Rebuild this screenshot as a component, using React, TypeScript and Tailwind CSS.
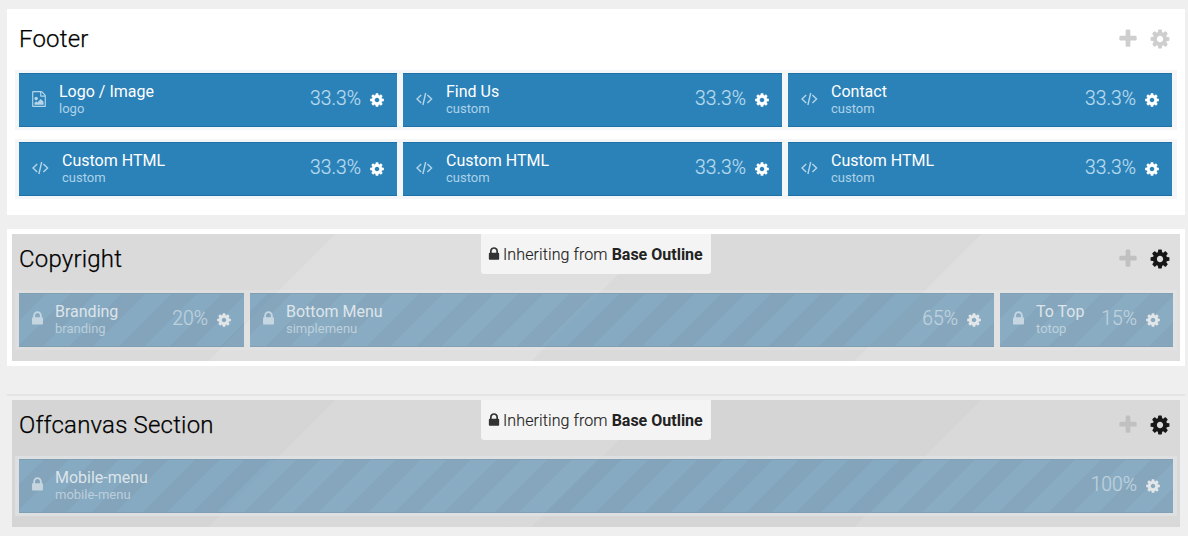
import React from "react";

const COG =
  "M1152 896q0-106-75-181t-181-75-181 75-75 181 75 181 181 75 181-75 75-181zm512-109v222q0 12-8 23t-20 13l-185 28q-19 54-39 91 35 50 107 138 10 12 10 25t-9 23q-27 37-99 108t-94 71q-12 0-26-9l-138-108q-44 23-91 38-16 136-29 186-7 28-36 28h-222q-14 0-24.5-8.5t-11.5-21.5l-28-184q-49-16-90-37l-141 107q-10 9-25 9-14 0-25-11-126-114-165-168-7-10-7-23 0-12 8-23 15-21 51-66.5t54-70.5q-27-50-41-99l-183-27q-13-2-21-12.5t-8-23.5v-222q0-12 8-23t19-13l186-28q14-46 39-92-40-57-107-138-10-12-10-24 0-10 9-23 26-36 98.5-107.5t94.5-71.5q13 0 26 10l138 107q44-23 91-38 16-136 29-186 7-28 36-28h222q14 0 24.5 8.5t11.5 21.5l28 184q49 16 90 37l142-107q9-9 24-9 13 0 25 10 129 119 165 170 7 8 7 22 0 12-8 23-15 21-51 66.5t-54 70.5q26 50 41 98l183 28q13 2 21 12.5t8 23.5z";
const PLUS =
  "M1600 736v192q0 40-28 68t-68 28h-416v416q0 40-28 68t-68 28h-192q-40 0-68-28t-28-68v-416h-416q-40 0-68-28t-28-68v-192q0-40 28-68t68-28h416v-416q0-40 28-68t68-28h192q40 0 68 28t28 68v416h416q40 0 68 28t28 68z";
const LOCK =
  "M640 768h512v-192q0-106-75-181t-181-75-181 75-75 181v192zm832 96v576q0 40-28 68t-68 28h-960q-40 0-68-28t-28-68v-576q0-40 28-68t68-28h32v-192q0-184 132-316t316-132 316 132 132 316v192h32q40 0 68 28t28 68z";
const IMAGE =
  "M1596 380q28 28 48 76t20 88v1152q0 40-28 68t-68 28h-1344q-40 0-68-28t-28-68v-1600q0-40 28-68t68-28h896q40 0 88 20t76 48zm-444-244v376h376q-10-29-22-41l-313-313q-12-12-41-22zm384 1528v-1024h-416q-40 0-68-28t-28-68v-416h-768v1536h1280zm-128-448v320h-1024v-192l192-192 128 128 384-384zm-832-192q-80 0-136-56t-56-136 56-136 136-56 136 56 56 136-56 136-136 56z";

function Glyph({ d, className }: { d: string; className: string }) {
  return (
    <svg viewBox="0 0 1792 1792" fill="currentColor" className={"shrink-0 " + className}>
      <path d={d} />
    </svg>
  );
}

function CodeIcon() {
  return (
    <svg viewBox="0 0 17 14" fill="none" stroke="currentColor" strokeWidth="1.4" className="ml-[1px] h-[14px] w-[17px] shrink-0">
      <path d="M5.2 3 1 7l4.2 4M11.4 3l4.2 4-4.2 4M9.7 1 6.9 13" />
    </svg>
  );
}

type BlockProps = {
  title: string;
  sub: string;
  size: string;
  icon?: "image" | "code" | "lock";
  width: string;
};

function Block({ title, sub, size, icon = "code", width }: BlockProps) {
  const locked = icon === "lock";
  const tone = locked
    ? "border-[#7f9fb4] bg-[repeating-linear-gradient(-45deg,#83a4bb_0px,#83a4bb_17.5px,#86aac2_17.5px,#86aac2_35.6px)]"
    : "border-[#1e70a8] bg-[#2b82b8]";
  return (
    <div className={"flex h-[54px] shrink-0 border-y bg-origin-border pr-[12px] pl-[12px] " + tone + " " + width}>
      <div className={"flex pt-[18px] " + (locked ? "text-[#c6d6e1]" : "text-[#b4d5ea]")}>
        {icon === "image" && <Glyph d={IMAGE} className="mt-[-1px] h-[16px] w-[16px]" />}
        {icon === "code" && <CodeIcon />}
        {locked && <Glyph d={LOCK} className="mt-[-2px] -ml-[2.5px] mr-[0.5px] h-[17px] w-[17px]" />}
      </div>
      <div className={"flex flex-col pt-[9px] " + (icon === "code" ? "ml-[13px]" : icon === "image" ? "ml-[12px]" : "ml-[9px]")}>
        <span className={"text-[16px] leading-[17px] whitespace-nowrap " + (locked ? "text-[#dde5ea]" : "text-white")}>{title}</span>
        <span className={"text-[13px] leading-[17px] whitespace-nowrap " + (locked ? "text-[#bccfdc]" : "text-[#add2e9]")}>{sub}</span>
      </div>
      <div className="ml-auto flex">
        <span className={"pt-[13px] text-[19.3px] leading-[24px] font-light [-webkit-text-stroke:0.2px_currentColor] " + (locked ? "text-[#bfd1dd]" : "text-[#b8daee]")}>{size}</span>
        <Glyph d={COG} className={"mt-[17.5px] ml-[8px] h-[16px] w-[16px] " + (locked ? "text-[#e3e6e8]" : "text-white")} />
      </div>
    </div>
  );
}

function Header({ title, locked }: { title: string; locked?: boolean }) {
  return (
    <div className="flex h-[51px] items-start justify-between pr-[9.5px] pl-[7px]">
      <h2 className="pt-[9px] text-[24px] leading-[32px] font-light tracking-[0.2px] text-black [-webkit-text-stroke:0.25px_currentColor]">{title}</h2>
      <div className="flex gap-[10px] pt-[13.5px]">
        <Glyph d={PLUS} className={"h-[22px] w-[22px] " + (locked ? "text-[#bfbfbf]" : "text-[#cecece]")} />
        <Glyph d={COG} className={"h-[22px] w-[22px] " + (locked ? "text-[#111]" : "text-[#cecece]")} />
      </div>
    </div>
  );
}

function Sheen() {
  return (
    <div className="pointer-events-none absolute inset-0 bg-[repeating-linear-gradient(135deg,transparent_0px,transparent_228.5px,rgba(255,255,255,0.025)_228.5px,rgba(255,255,255,0.025)_457px)]" />
  );
}

function InheritTag() {
  return (
    <div className="absolute top-0 left-[469px] flex h-[40px] w-[230px] rounded-b-[3px] bg-[#f4f4f4] pl-[5px] text-[#333]">
      <Glyph d={LOCK} className="mt-[11.5px] h-[16px] w-[16px]" />
      <span className="mt-[11px] ml-[1px] text-[16px] leading-[20px] font-light tracking-[0.1px] whitespace-nowrap text-[#222] [-webkit-text-stroke:0.15px_currentColor]">
        Inheriting from <b className="font-bold tracking-normal text-[#222] [-webkit-text-stroke:0px]">Base Outline</b>
      </span>
    </div>
  );
}

const SHADE =
  "relative h-[127px] bg-[repeating-linear-gradient(135deg,#dadada_0px,#dadada_228.5px,#dedede_228.5px,#dedede_457px)]";
const SHADE_DARK =
  "relative h-[127px] bg-[repeating-linear-gradient(135deg,#d5d5d5_0px,#d5d5d5_228.5px,#d8d8d8_228.5px,#d8d8d8_457px)]";

export default function App() {
  return (
    <main className="h-[536px] w-[1188px] overflow-hidden bg-[#efefef] pt-[9px] pr-[3px] pl-[7px] font-['Roboto',sans-serif]">
      <section className="h-[206px] bg-white px-[5px] pt-[5px]">
        <Header title="Footer" />
        <div className="mx-[3px] mt-[5px] flex h-[60px] gap-[6px] bg-[#f5f6f7] px-[4px] pt-[3px]">
          <Block title="Logo / Image" sub="logo" size="33.3%" icon="image" width="w-[378px]" />
          <Block title="Find Us" sub="custom" size="33.3%" width="w-[379px]" />
          <Block title="Contact" sub="custom" size="33.3%" width="w-[384px]" />
        </div>
        <div className="mx-[3px] mt-[9px] flex h-[60px] gap-[6px] bg-[#f5f6f7] px-[4px] pt-[3px]">
          <Block title="Custom HTML" sub="custom" size="33.3%" width="w-[378px]" />
          <Block title="Custom HTML" sub="custom" size="33.3%" width="w-[379px]" />
          <Block title="Custom HTML" sub="custom" size="33.3%" width="w-[384px]" />
        </div>
      </section>

      <section className="mt-[14px] h-[137px] bg-white p-[5px]">
        <div className={SHADE}>
          <Header title="Copyright" locked />
          <div className="mx-[3px] mt-[5px] flex h-[60px] gap-[6px] bg-white/10 px-[4px] pt-[3px]">
            <Block title="Branding" sub="branding" size="20%" icon="lock" width="w-[225px]" />
            <Block title="Bottom Menu" sub="simplemenu" size="65%" icon="lock" width="w-[744px]" />
            <Block title="To Top" sub="totop" size="15%" icon="lock" width="w-[173px]" />
          </div>
          <Sheen />
          <InheritTag />
        </div>
      </section>

      <section className="mt-[28px] h-[142px] border-t-2 border-[#e4e4e4] px-[5px] pt-[4px]">
        <div className={SHADE_DARK}>
          <Header title="Offcanvas Section" locked />
          <div className="mx-[3px] mt-[5px] flex h-[60px] bg-[#dddfe0] px-[4px] pt-[3px]">
            <Block title="Mobile-menu" sub="mobile-menu" size="100%" icon="lock" width="w-[1154px]" />
          </div>
          <Sheen />
          <InheritTag />
        </div>
      </section>
    </main>
  );
}
